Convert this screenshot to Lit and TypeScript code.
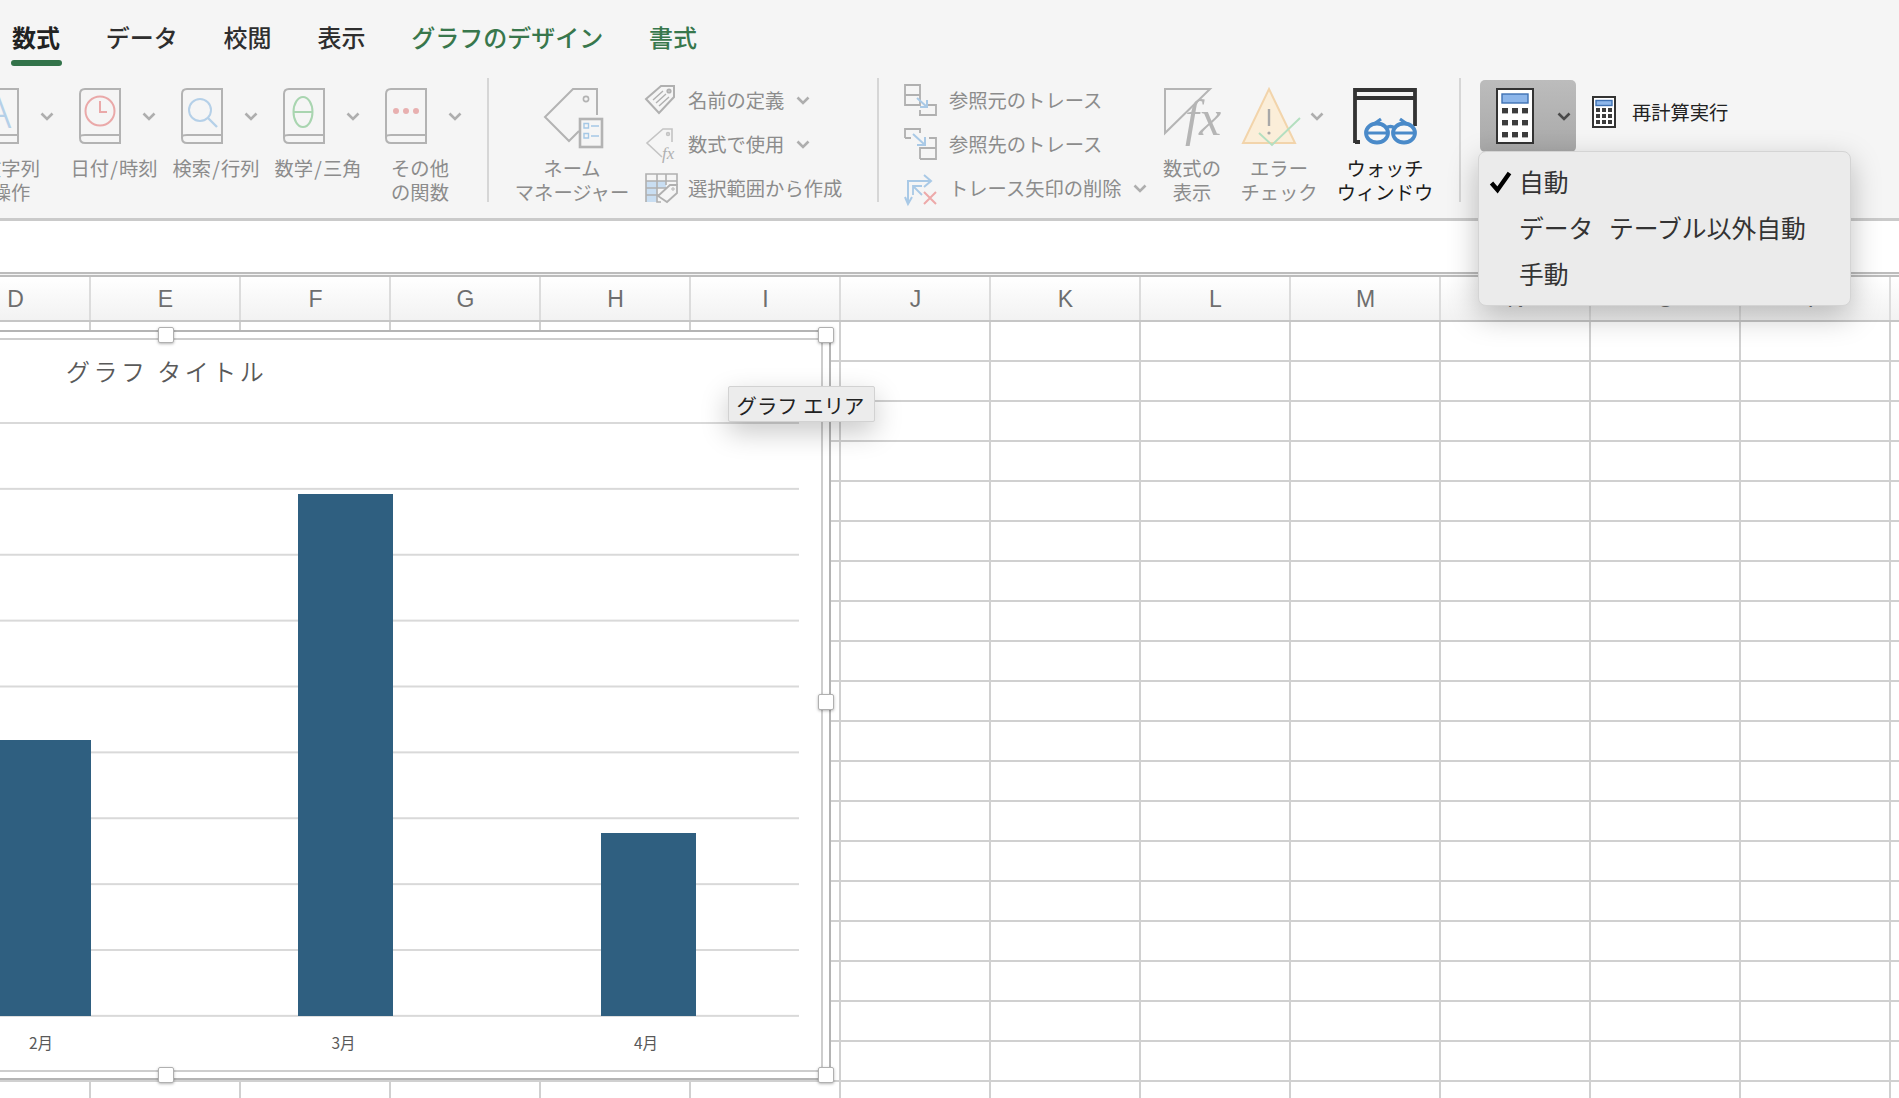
import { LitElement, html, css, svg } from "lit";
import { customElement } from "lit/decorators.js";

const GREY = "#b3b3b3";
const chevron = html`<svg class="chev" width="14" height="9" viewBox="0 0 14 9"><polyline points="1.5,1.5 7,7 12.5,1.5" fill="none" stroke="#aeaeae" stroke-width="2.6"/></svg>`;

const book = (inner: unknown) => html`<svg width="42" height="56" viewBox="0 0 42 56"><g fill="none">${inner}
<path d="M6 1H41V55H6C3 55 1 53 1 50V6C1 3 3 1 6 1Z" stroke="${GREY}" stroke-width="2"/>
<path d="M1 50C1 47 3 47 6 47H41" stroke="${GREY}" stroke-width="2"/></g></svg>`;

const fnIcons = [
  svg`<text x="21" y="40" text-anchor="middle" font-family="Noto Sans" font-weight="300" font-size="44" fill="#b5d0e8">A</text>`,
  svg`<circle cx="21" cy="23" r="14.5" stroke="#eaa9a9" stroke-width="2"/><path d="M21 13V24H28" stroke="#eaa9a9" stroke-width="2"/>`,
  svg`<circle cx="19" cy="22" r="11" stroke="#b5d0e8" stroke-width="2"/><path d="M27 30L36 39" stroke="#b5d0e8" stroke-width="2.4"/>`,
  svg`<ellipse cx="20" cy="24" rx="9.5" ry="15" stroke="#a9d5b0" stroke-width="2"/><path d="M10 24H30" stroke="#a9d5b0" stroke-width="2"/>`,
  svg`<g fill="#e8b0b0"><circle cx="11" cy="23" r="3"/><circle cx="21" cy="23" r="3"/><circle cx="31" cy="23" r="3"/></g>`,
];

const fns = [
  { label: "文字列\n操作", shift: true },
  { label: "日付\u200a/\u200a時刻" },
  { label: "検索\u200a/\u200a行列" },
  { label: "数学\u200a/\u200a三角" },
  { label: "その他\nの関数" },
];

const calc = (w: number, h: number, big: boolean) => {
  const keys = [];
  const xs = big ? [6, 16, 26] : [4, 10, 16];
  const ys = big ? [20, 32, 44] : [12, 18, 24];
  for (const y of ys) for (const x of xs) keys.push(svg`<rect x="${x}" y="${y}" width="${big ? 6 : 4}" height="${big ? 5.4 : 4}" fill="#3c3c3c"/>`);
  return html`<svg width="${w}" height="${h}" viewBox="0 0 ${w} ${h}">
    <rect x="1" y="1" width="${w - 2}" height="${h - 2}" fill="#fff" stroke="#333" stroke-width="2"/>
    <rect x="${big ? 6 : 4}" y="${big ? 6 : 4.5}" width="${big ? 26 : 16}" height="${big ? 9 : 5}" fill="#8db6ea" stroke="#3f72b4" stroke-width="1.4"/>
    ${keys}</svg>`;
};

const smallIcons = {
  define: html`<svg width="32" height="32" viewBox="0 0 32 32" fill="none" stroke="#b0b0b0" stroke-width="2"><path d="M1 15L16 2H29V13L14 29Z"/><circle cx="24" cy="7" r="1.6"/><path d="M8 16L18 7M11 19L21 10M14 22L24 13" stroke-width="1.4"/></svg>`,
  use: html`<svg width="32" height="32" viewBox="0 0 32 32" fill="none" stroke="#c4c4c4" stroke-width="1.6"><path d="M17 29L2 15L18 1H27V14"/><circle cx="23" cy="6" r="1.4"/><text x="17" y="31" font-family="Liberation Serif" font-style="italic" font-size="17" fill="#b0b0b0" stroke="none">fx</text></svg>`,
  create: html`<svg width="33" height="30" viewBox="0 0 33 30" fill="none"><rect x="1" y="8" width="20" height="7" fill="#c9def2"/><rect x="1" y="15" width="11" height="14" fill="#c9def2"/><path d="M1 29V1H32V12M1 8H32M12 1V29H16M21 1V12M1 15H24M1 22H14" stroke="#b0b0b0" stroke-width="1.6"/><path d="M13 23L25 12H32V20L22 29Z" fill="#f5f5f5" stroke="#b0b0b0" stroke-width="1.8"/><circle cx="28" cy="16" r="1.2" stroke="#b0b0b0"/></svg>`,
  precedent: html`<svg width="33" height="32" viewBox="0 0 33 32" fill="none"><path d="M1 1H16V21H1ZM1 11H16" stroke="#b0b0b0" stroke-width="1.8"/><path d="M15 31H32V21H24M16 31V26" stroke="#b0b0b0" stroke-width="1.8"/><path d="M13 14L23 23M23 16V23H16" stroke="#a9c9e6" stroke-width="2"/></svg>`,
  dependent: html`<svg width="33" height="32" viewBox="0 0 33 32" fill="none"><path d="M1 10V1H16V5M1 10H7" stroke="#b0b0b0" stroke-width="1.8"/><path d="M16 31H32V10H25M16 31V20H32" stroke="#b0b0b0" stroke-width="1.8"/><path d="M9 6L21 17M21 9V17H13" stroke="#a9c9e6" stroke-width="2"/></svg>`,
  remove: html`<svg width="33" height="34" viewBox="0 0 33 34" fill="none"><path d="M4 33V10H26M20 4L27 10L20 16M1 26L4 33L8 26" stroke="#a9c9e6" stroke-width="2"/><path d="M9 24V15H18M9 15L18 24" stroke="#a9c9e6" stroke-width="1.8"/><path d="M20 21L32 33M32 21L20 33" stroke="#eda9a9" stroke-width="2"/></svg>`,
};

const cols = ["D", "E", "F", "G", "H", "I", "J", "K", "L", "M", "N", "O", "P"];
const bars = [
  { name: "2月", h: 276 },
  { name: "3月", h: 522 },
  { name: "4月", h: 183 },
];

@customElement("app-root")
export class AppRoot extends LitElement {
  static styles = css`
    :host { display: block; position: relative; width: 1899px; height: 1098px; overflow: hidden; background: #fff;
      font-family: "Noto Sans CJK JP", "Noto Sans", sans-serif; }
    svg { display: block; overflow: visible; }
    .ribbon { height: 218px; background: #f5f5f5; border-bottom: 3px solid #cacaca; }
    .tabs { display: flex; gap: 45.8px; height: 78px; padding-left: 12px; box-sizing: border-box; }
    .tab { position: relative; padding-top: 23px; font-size: 24px; line-height: 28px; font-weight: 500; color: #2e2e2e; white-space: nowrap; }
    .tab.green { color: #38774c; }
    .tab.on { font-weight: 700; color: #222; }
    .tab.on::after { content: ""; position: absolute; left: -1px; right: -2px; top: 60px; height: 6px; border-radius: 3px; background: #33734a; }
    .row { display: flex; align-items: flex-start; padding-top: 10px; margin-left: -39px; color: #8c8c8c; font-size: 19.3px; line-height: 24px; }
    .fn { width: 102px; display: grid; grid-template-columns: 16px 42px 44px; align-items: center; }
    .fn svg:first-of-type { grid-column: 2; }
    .fn .chev { grid-column: 3; margin-left: 21px; margin-top: 0; }
    .fn svg { grid-row: 1; }
    .lbl { grid-column: 1 / -1; text-align: center; white-space: pre-line; margin-top: 12px; }
    .fn.first .lbl { transform: translateX(-1px); }
    .sep { width: 2px; height: 124px; margin-top: -10px; background: #d6d6d6; flex: none; }
    .sep1 { margin-left: 16px; }
    .big { display: flex; flex-direction: column; align-items: center; flex: none; }
    .big .lbl { white-space: pre; }
    .ic { height: 56px; display: flex; }
    .names { width: 116px; margin-left: 25px; }
    .names .ic { margin-left: 4px; }
    .small { flex: none; margin-top: -10px; display: flex; flex-direction: column; }
    .sr { height: 44px; display: flex; align-items: center; white-space: nowrap; }
    .sr .slot { display: flex; justify-content: center; }
    .s2 { width: 232px; margin-left: 15px; }
    .s2 .slot { width: 32px; margin-right: 11px; }
    .s2 .chev { margin-left: 12px; }
    .s3 { width: 248px; margin-left: 25px; }
    .s3 .slot { width: 33px; margin-right: 12px; }
    .s3 .chev { margin-left: 11px; }
    .fxc { width: 80px; }
    .fxc text { font-family: "Liberation Serif", serif; font-style: italic; }
    .errc { width: 94px; }
    .errc .ic { align-self: flex-start; margin-left: 10px; align-items: center; }
    .errc .chev { margin-left: 14px; }
    .watch { width: 118px; color: #1c1c1c; }
    .sep3 { margin-left: 15px; }
    .calcbtn { flex: none; width: 96px; height: 72px; margin: -8px 0 0 19px; box-sizing: border-box; border-radius: 5px; padding-left: 16px;
      background: linear-gradient(#bcbcbc, #a9a9a9); display: flex; align-items: center; }
    .calcbtn .chev { margin-left: 23px; }
    .calcbtn .chev polyline { stroke: #4a4a4a; }
    .recalc { display: flex; align-items: center; gap: 16px; margin: 8px 0 0 16px; color: #222; white-space: nowrap; height: 32px; }

    .fbar { height: 51px; background: #fff; }
    .dbl { height: 1px; border-top: 2px solid #bcbcbc; border-bottom: 2px solid #bcbcbc; background: #f4f4f4; }
    .head { display: flex; height: 43px; margin-left: -59px; border-bottom: 2px solid #c6c6c6; box-sizing: content-box;
      background: linear-gradient(#fff, #f2f2f2); font-family: "Liberation Sans", sans-serif; font-size: 23px; color: #6e6e6e; }
    .head div { flex: none; width: 150px; box-sizing: border-box; border-right: 2px solid #dcdcdc; padding: 2px 0 0 1px; display: flex; align-items: center; justify-content: center; }
    .cells { height: 776px; background-color: #fff;
      background-image: linear-gradient(to right, transparent 148px, #d0d0d0 148px), linear-gradient(to bottom, transparent 38px, #d0d0d0 38px);
      background-size: 150px 40px; background-position: -59px 0, 0 0; }

    .chart { position: absolute; left: -10px; top: 330px; width: 841px; height: 750px; box-sizing: border-box; border: 2px solid #b4b4b4; background: #fff; padding: 6px; }
    .inner { height: 100%; box-sizing: border-box; border: 2px solid #cdcdcd; }
    .title { height: 82px; line-height: 62px; padding-left: 66px; font-size: 24px; letter-spacing: 3.5px; color: #595959; white-space: pre; font-weight: 350; }
    .plot { margin-left: -108.25px; width: 907.5px; height: 595px; box-sizing: border-box; padding-bottom: 1px; display: flex; align-items: flex-end;
      background-image: linear-gradient(#d9d9d9 2px, transparent 2px); background-size: 100% 65.89px; }
    .cat { flex: 1; display: flex; justify-content: center; }
    .bar { width: 95px; background: #2f5f80; }
    .xlabels { margin-left: -108.25px; width: 907.5px; display: flex; margin-top: 15px; font-size: 15.5px; line-height: 20px; color: #595959; }
    .xlabels div { flex: 1; text-align: center; transform: translateX(-2px); }
    .h { position: absolute; width: 16px; height: 16px; box-sizing: border-box; background: #fff; border: 1px solid #b0b0b0; border-radius: 2px; box-shadow: 0 1px 3px rgba(0,0,0,.3); }
    .h.tm { left: 166px; top: -5px; } .h.tr { left: 826px; top: -5px; } .h.mr { left: 826px; top: 362px; }
    .h.bm { left: 166px; top: 735px; } .h.br { left: 826px; top: 735px; }
    .tip { position: absolute; left: 728px; top: 386px; width: 147px; height: 36px; box-sizing: border-box; background: #ececec; border: 1px solid #d2d2d2; border-radius: 2px;
      box-shadow: 0 10px 28px rgba(0,0,0,.22); font-size: 20.4px; word-spacing: 1px; line-height: 36px; text-align: center; color: #222; white-space: pre; padding-right: 2px; }
    .menu { position: absolute; left: 1478px; top: 151px; width: 373px; height: 155px; box-sizing: border-box; padding-top: 6px; background: #ebebeb; border: 1px solid #d4d4d4; border-radius: 8px;
      box-shadow: 0 10px 30px rgba(0,0,0,.25); font-size: 24.8px; word-spacing: 10px; color: #333; }
    .mi { height: 46px; display: flex; align-items: center; white-space: pre; }
    .mi .ck { width: 40px; padding-left: 10px; box-sizing: border-box; flex: none; }
  `;

  render() {
    return html`
      <div class="ribbon">
        <div class="tabs">
          <div class="tab on">数式</div><div class="tab">データ</div><div class="tab">校閲</div><div class="tab">表示</div>
          <div class="tab green">グラフのデザイン</div><div class="tab green">書式</div>
        </div>
        <div class="row">
          ${fns.map((f, i) => html`<div class="fn ${i === 0 ? "first" : ""}">${book(fnIcons[i])}${chevron}<div class="lbl">${f.label}</div></div>`)}
          <div class="sep sep1"></div>
          <div class="big names">
            <div class="ic"><svg width="60" height="60" viewBox="0 0 60 60" fill="none">
              <path d="M35 43L25 53L1 29L29 1H53V27" stroke="${GREY}" stroke-width="2"/><circle cx="42" cy="11" r="2.6" stroke="${GREY}" stroke-width="1.6"/>
              <rect x="36" y="31" width="22" height="28" fill="#f5f5f5" stroke="${GREY}" stroke-width="2.6"/>
              <path d="M40 35.5h4.5v4.5h-4.5zM40 45.5h4.5v4.5h-4.5z" stroke="#a5c8e6" stroke-width="1.4"/><path d="M47 38H55M47 48H55" stroke="#a5c8e6" stroke-width="1.6"/></svg></div>
            <div class="lbl">ネーム\nマネージャー</div>
          </div>
          <div class="small s2">
            <div class="sr"><span class="slot">${smallIcons.define}</span>名前の定義${chevron}</div>
            <div class="sr"><span class="slot">${smallIcons.use}</span>数式で使用${chevron}</div>
            <div class="sr"><span class="slot">${smallIcons.create}</span>選択範囲から作成</div>
          </div>
          <div class="sep"></div>
          <div class="small s3">
            <div class="sr"><span class="slot">${smallIcons.precedent}</span>参照元のトレース</div>
            <div class="sr"><span class="slot">${smallIcons.dependent}</span>参照先のトレース</div>
            <div class="sr"><span class="slot">${smallIcons.remove}</span>トレース矢印の削除${chevron}</div>
          </div>
          <div class="big fxc">
            <div class="ic"><svg width="56" height="56" viewBox="0 0 56 56" fill="none"><path d="M1 1H46L1 45Z" stroke="#b5b5b5" stroke-width="2"/>
              <text x="21" y="47" font-size="50" fill="#b5b5b5">fx</text></svg></div>
            <div class="lbl">数式の\n表示</div>
          </div>
          <div class="big errc">
            <div class="ic"><svg width="54" height="56" viewBox="0 0 54 56" fill="none"><path d="M27 1L53 55H1Z" fill="#fbeed9" stroke="#f2d4ab" stroke-width="2"/>
              <path d="M27 21V38" stroke="#a8a8a8" stroke-width="2.4"/><circle cx="27" cy="45" r="1.6" fill="#a8a8a8"/><path d="M17 45L30 57L58 30" stroke="#b4dfc0" stroke-width="2"/></svg>${chevron}</div>
            <div class="lbl">エラー\nチェック</div>
          </div>
          <div class="big watch">
            <div class="ic"><svg width="64" height="56" viewBox="0 0 64 56" fill="none">
              <path d="M2 55V2H62V38M2 10H62M2 54H7" stroke="#333" stroke-width="3.8"/>
              <ellipse cx="24" cy="45" rx="11" ry="9.5" fill="#f8f8f8" stroke="#4a8ac9" stroke-width="3.8"/><ellipse cx="51" cy="45" rx="11" ry="9.5" fill="#f8f8f8" stroke="#4a8ac9" stroke-width="3.8"/>
              <path d="M13 45H35M40 45H62M33 40C36 38 39 38 42 40M21 36L28 31M54 36L47 31" stroke="#4a8ac9" stroke-width="3.2"/></svg></div>
            <div class="lbl">ウォッチ\nウィンドウ</div>
          </div>
          <div class="sep sep3"></div>
          <div class="calcbtn">${calc(38, 56, true)}${chevron}</div>
          <div class="recalc">${calc(24, 32, false)}<span>再計算実行</span></div>
        </div>
      </div>
      <div class="fbar"></div>
      <div class="dbl"></div>
      <div class="head">${cols.map((c) => html`<div>${c}</div>`)}</div>
      <div class="cells"></div>

      <div class="chart">
        <div class="inner">
          <div class="title">グラフ タイトル</div>
          <div class="plot">${bars.map((b) => html`<div class="cat"><div class="bar" style="height:${b.h}px"></div></div>`)}</div>
          <div class="xlabels">${bars.map((b) => html`<div>${b.name}</div>`)}</div>
        </div>
        <div class="h tm"></div><div class="h tr"></div><div class="h mr"></div><div class="h bm"></div><div class="h br"></div>
      </div>
      <div class="tip">グラフ エリア</div>
      <div class="menu">
        <div class="mi"><span class="ck"><svg width="23" height="23" viewBox="0 0 23 23" fill="none"><path d="M2.5 13L8.5 20L20.5 3" stroke="#000" stroke-width="4.4"/></svg></span>自動</div>
        <div class="mi"><span class="ck"></span>データ テーブル以外自動</div>
        <div class="mi"><span class="ck"></span>手動</div>
      </div>
    `;
  }
}
